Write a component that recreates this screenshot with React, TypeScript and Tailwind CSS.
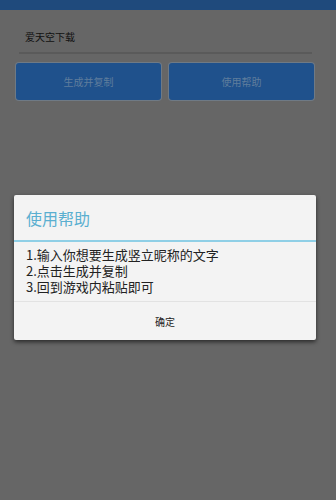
export default function App() {
  const font = { fontFamily: '"Noto Sans CJK SC", "Noto Sans", sans-serif' };

  return (
    <div className="relative h-[500px] w-[336px] overflow-hidden bg-[#666666]" style={font}>
      {/* Top bar */}
      <div className="h-[10px] bg-[#1f4a7c]" />

      {/* Input */}
      <div className="pl-[19px] pr-[24px] pt-[17px]">
        <div className="px-[6px] text-[10px] leading-[20px] text-[#111]">爱天空下载</div>
        <div className="mt-[5px] h-[2px] bg-[#5a5a5a]" />
      </div>

      {/* Buttons */}
      <div className="mt-[9px] grid grid-cols-2 gap-[8px] pl-[16px] pr-[22px]">
        <div className="flex h-[37px] items-center justify-center rounded-[3px] bg-[#1f518c] text-[10px] text-[#5f7d9c] ring-1 ring-[#6f7a85]">
          生成并复制
        </div>
        <div className="flex h-[37px] items-center justify-center rounded-[3px] bg-[#1f518c] text-[10px] text-[#5f7d9c] ring-1 ring-[#6f7a85]">
          使用帮助
        </div>
      </div>

      {/* Dialog */}
      <div className="absolute left-[14px] top-[195px] w-[302px] rounded-[2px] bg-[#f3f3f3] shadow-[0_2px_4px_rgba(0,0,0,0.6)]">
        <div className="flex h-[45px] items-center px-[12px] text-[16px] text-[#5aafd0]">使用帮助</div>
        <div className="h-[2px] bg-[#8fcfe6]" />
        <div className="px-[12px] pt-[5px] pb-[6px] text-[13px] leading-[16px] text-[#222]">
          <div>1.输入你想要生成竖立昵称的文字</div>
          <div>2.点击生成并复制</div>
          <div>3.回到游戏内粘贴即可</div>
        </div>
        <div className="h-px bg-[#e2e2e2]" />
        <div className="flex h-[38px] items-center justify-center text-[10px] text-[#222]">确定</div>
      </div>
    </div>
  );
}
